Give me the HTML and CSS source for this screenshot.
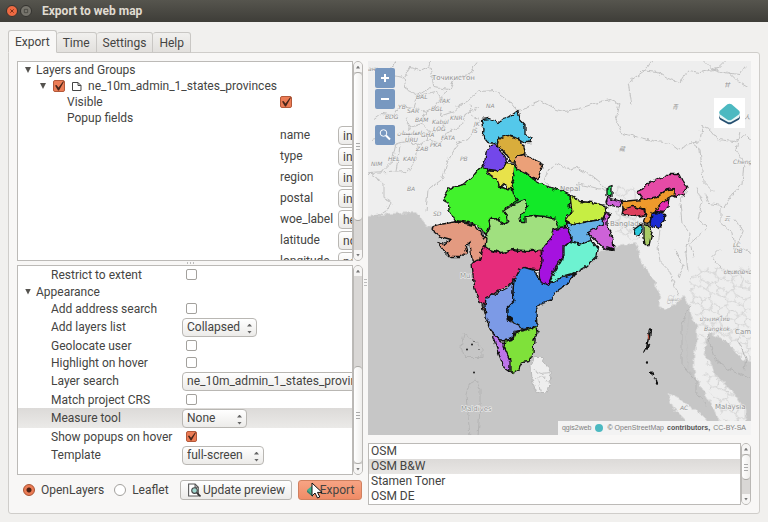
FILE: index.html
```html
<!DOCTYPE html>
<html lang="en">
<head>
<meta charset="utf-8">
<title>Export to web map</title>
<link rel="stylesheet" href="styles.css">
</head>
<body>
<header class="titlebar">
  <button class="win-btn win-close" aria-label="Close"><svg viewBox="0 0 12 12"><path d="M4 4l4 4M8 4l-4 4"/></svg></button>
  <button class="win-btn" aria-label="Maximize"><svg viewBox="0 0 12 12"><path d="M4 4h4v4h-4z"/></svg></button>
  <h1>Export to web map</h1>
</header>
<main class="dialog">
  <nav class="tabs" role="tablist">
    <button class="tab active" role="tab" aria-selected="true">Export</button>
    <button class="tab" role="tab">Time</button>
    <button class="tab" role="tab">Settings</button>
    <button class="tab" role="tab">Help</button>
  </nav>
  <div class="panel">
    <section class="left">
      <div class="pane layers">
        <div class="tree">
          <div class="row group"><i class="arrow"></i>Layers and Groups</div>
          <div class="row layer"><i class="arrow"></i><input type="checkbox" id="layer" checked><svg class="poly" viewBox="0 0 10 10"><path d="M.5 1.500h5.500l3 3v5h-8.500z"/><path d="M6 1.500v3h3"/></svg><label for="layer">ne_10m_admin_1_states_provinces</label></div>
          <div class="row sub"><label class="name" for="visible">Visible</label><input type="checkbox" id="visible" checked></div>
          <div class="row sub"><span class="name">Popup fields</span></div>
          <div class="row field"><label for="f1">name</label><select id="f1"><option>inline label</option></select></div>
          <div class="row field"><label for="f2">type</label><select id="f2"><option>inline label</option></select></div>
          <div class="row field"><label for="f3">region</label><select id="f3"><option>inline label</option></select></div>
          <div class="row field"><label for="f4">postal</label><select id="f4"><option>inline label</option></select></div>
          <div class="row field"><label for="f5">woe_label</label><select id="f5"><option>header label</option></select></div>
          <div class="row field"><label for="f6">latitude</label><select id="f6"><option>no label</option></select></div>
          <div class="row field"><label for="f7">longitude</label><select id="f7"><option>no label</option></select></div>
        </div>
        <div class="scroll"><i class="cap up"></i><i class="thumb thumb-layers"></i><i class="rest"></i><i class="cap down"></i></div>
      </div>
      <div class="grip-h"></div>
      <div class="pane options">
        <div class="tree">
          <div class="row opt"><label for="o1">Restrict to extent</label><input type="checkbox" id="o1"></div>
          <div class="row opt group"><i class="arrow"></i>Appearance</div>
          <div class="row opt"><label for="o2">Add address search</label><input type="checkbox" id="o2"></div>
          <div class="row opt tall"><label for="o3">Add layers list</label><span class="combo w-m"><select id="o3"><option>Collapsed</option></select></span></div>
          <div class="row opt"><label for="o4">Geolocate user</label><input type="checkbox" id="o4"></div>
          <div class="row opt"><label for="o5">Highlight on hover</label><input type="checkbox" id="o5"></div>
          <div class="row opt tall"><label for="o6">Layer search</label><span class="combo w-xl"><select id="o6"><option>ne_10m_admin_1_states_provinces: name</option></select></span></div>
          <div class="row opt"><label for="o7">Match project CRS</label><input type="checkbox" id="o7"></div>
          <div class="row opt tall current"><label for="o8">Measure tool</label><span class="combo w-s"><select id="o8"><option>None</option></select></span></div>
          <div class="row opt"><label for="o9">Show popups on hover</label><input type="checkbox" id="o9" checked></div>
          <div class="row opt tall"><label for="o10">Template</label><span class="combo w-l"><select id="o10"><option>full-screen</option></select></span></div>
        </div>
        <div class="scroll"><i class="cap up"></i><i class="rest"></i><i class="thumb thumb-options"></i><i class="cap down"></i></div>
      </div>
      <div class="actions">
        <label class="radio"><input type="radio" name="lib" checked>OpenLayers</label>
        <label class="radio"><input type="radio" name="lib">Leaflet</label>
        <button class="btn preview"><svg viewBox="0 0 13 13"><path d="M1.500 1h6l3 3v8h-9z" fill="#fff" stroke="#555"/><path d="M7.500 1v3h3" fill="none" stroke="#555"/><circle cx="7" cy="7" r="2.600" fill="#9fd8d0" stroke="#444"/><path d="M9 9l3.500 3.500" stroke="#333" stroke-width="1.500"/></svg>Update preview</button>
        <div class="export-wrap">
          <button class="btn export"><svg viewBox="0 0 14 14"><path d="M1 7l6-5 6 5-6 5z" fill="#3bb08f"/><path d="M1 7l6 5v2L1 9z" fill="#2b8272"/></svg>Export</button>
          <svg class="cursor" viewBox="0 0 12 17"><path d="M1 1v13l3-3 2.500 5 2.300-1-2.300-4.600H11z" fill="#fff" stroke="#111" stroke-linejoin="round"/></svg>
        </div>
      </div>
    </section>
    <div class="grip-v"></div>
    <section class="right">
      <div class="map">
        <svg class="map-art" viewBox="368 61 383 375" preserveAspectRatio="xMidYMid slice" role="img" aria-label="Map of India by state">
          <defs>
            <filter id="rough" x="-5%" y="-5%" width="110%" height="110%" color-interpolation-filters="sRGB">
              <feTurbulence type="fractalNoise" baseFrequency="0.2" numOctaves="2" seed="4"/>
              <feDisplacementMap in="SourceGraphic" scale="5" xChannelSelector="R" yChannelSelector="G"/>
              <feGaussianBlur stdDeviation="0.3"/>
            </filter>
            <pattern id="cells" width="19" height="17" patternUnits="userSpaceOnUse" patternTransform="rotate(24)">
              <path d="M0 4l5 2 3-5 6 4 5-1M5 6l-1 5 5 3 6-3-1-6M0 12l4-1M15 11l4 1M9 14l1 3M10 0l-2 1" fill="none" stroke="#d2d2d2"/>
            </pattern>
          </defs>
          <rect x="368" y="61" width="383" height="375" fill="#c6c6c6"/>
          <g filter="url(#rough)">
            <path fill="#eee" stroke="#d9d9d9" d="M360 50H760V364L742 360 730 345 720 338 709 333 706 345 704 355 710 362 715 375 725 385 735 395 745 410 745 420 751 445H727L722 425 716 415 712 405 704 392 697 380 694 370 694 355 697 342 697 325 693 320 688 305 684 296 675 305 665 310 659 308 660 295 655 284 650 275 641 262 638 250 635 243 615 248 598 252 560 280 525 325 500 332 487 305 479 262 479 232 433 228 427 227 421 218 417 213 390 214 360 218z"/>
            <path fill="#eee" stroke="#d9d9d9" d="M668 394l12 6 12 8 13 10 7 9 6 12h-20l-13-19-13-13z"/>
            <path fill="#eee" stroke="#b8b8b8" d="M534 358l8 0 8 14 1 13-6 8-9 0-4-13-1-14z"/>
            <path fill="none" stroke="#c4c4c4" d="M533 370l8 4 8-1M535 380l7-4 7 8M540 392l-2-12"/>
            <path fill="url(#cells)" d="M698 268H755V364L742 360 730 345 720 338 709 333 706 345 700 342 698 320 690 305 690 280zM706 355l9 18 20 22 10 15 6 26h-20l-15-31-12-25zM615 205h24v35h-24zM616 187h20v12h-20z"/>
            <g fill="none" stroke="#c2c2c2">
              <path d="M368 70l8-2 8 8 8-8 4-8M392 76l12 2 6-10 10 3 9-4 1-7M430 68l4 20 16 2 5-12 14-3 8-12M404 78l2 12 12 6 12-8M418 96l-4 12-14-2-6 10-12-2-8 6M414 108l12 4 10-6 8-12 6-4M436 106l6 10 12-4 8-8M426 112l-4 12 8 8 12-2 4-10M422 124l-12 4-4-10M410 128l-2 14 10 4 10-6 2-8M408 142l-12 2-10-8-14 4M396 144l-4 18-12 12M400 146l-4 26M418 146l-2 14-8 12-40 2M428 140l12 4 8-12 12-4 6-14 12-6M448 160l-6 20-14 10-2 22M448 160l10-16 10-4 8-12M368 172l16 12 0 14 8 4-5 8-10 7M418 96l18-4 8 12M455 107l12-5 12-10 16-1 14 10 8 10M470 105l2 12 10 6M517 111l9-2 14-8 16 9 8 2 16-3 14-5 16-4 10 4"/>
              <path d="M544 181l4-10 10-7 10 6 8-2 16 9 12 10 4 3M544 181l10 9 8 3M560 192l12 4M606 191l-16-4-14-3M632 105l-4-22 18-13 6-9M640 71l18 2 10 6 12 4 8-12 12 2 18-4 8-8M728 72l10 10 10 6M704 61l8 8 12 4 16 2 5-8M620 104l-4 16 6 14 18 4 16 4 14 2 8 6 12-6 10-2 2-16 8 4 8 10 16 2 10-6 12 8M690 142l10 8 3 32 10 10M740 132l-4 18 8 14-2 20-12 14-6 10M688 190l-8 12 2 22 8 10-4 20 2 18M696 188l6 14-4 18 10 8M705 194l4 10 12 2 0 18 12 10 2 16M708 228l-18 16 4 14M660 230l-2 18 2 14 10 10 8 24M675 250l8 16-4 12M735 220l8 12-6 14 14 8M720 250l-8 8 10 12M690 310l-4 30 2 30 8 10"/>
              <path d="M690 305l-8 20 0 40 14 16 0 12 10 12M707 334l8 26 14 10 20 8M738 340l8 20-2 10" stroke="#b4b4b4"/>
            </g>
            <path fill="none" stroke="#b4b4b4" d="M464 334l18 14v10h-17l-4-10zM470 383l6-3 4 10v18l-2 30M470 383l-4 12 4 42"/>
          </g>
          <g class="labels">
            <text x="432" y="80" class="country">Точикистон</text>
            <text x="416" y="99">BAL</text><text x="439" y="103">TAK</text><text x="398" y="109">YB</text><text x="407" y="113">SAR</text><text x="431" y="111">BGL</text><text x="385" y="119">BDG</text><text x="415" y="122">BAM</text><text x="450" y="120">KNR</text><text x="432" y="124">Kabul</text><text x="433" y="131">LOG</text><text x="421" y="137">GHA</text><text x="441" y="140">FATA</text><text x="405" y="142">URU</text><text x="430" y="147">PKA</text><text x="416" y="151">ZAB</text><text x="371" y="166">NIM</text><text x="388" y="161">HEL</text><text x="403" y="161">KAN</text><text x="486" y="108">NA</text><text x="474" y="126">JK</text><text x="472" y="133">IS</text><text x="460" y="161">PB</text><text x="407" y="191">BA</text><text x="433" y="216">SD</text><text x="368" y="71">ан</text><text x="397" y="135">افغانستان</text>
            <text x="560" y="191" class="country">Nepal</text><text x="610" y="226" class="country">Bangladesh</text><text x="460" y="278" class="country">Mum</text><text x="461" y="411" class="country">Maldives</text>
            <text x="672" y="109">青</text><text x="619" y="151">藏</text><text x="724" y="87">甘</text><text x="744" y="119">人</text><text x="724" y="221">云</text><text x="733" y="164">Cheng</text><text x="733" y="247">LC</text><text x="734" y="253">DB</text><text x="724" y="274">ປະເທດລາວ</text><text x="667" y="301">မြန်မာ</text><text x="699" y="321">ประเทศไทย</text><text x="704" y="331">Bangkok</text><text x="735" y="334" class="country">Cam</text><text x="680" y="410">AC</text><text x="715" y="409" class="country">Malaysia</text>
          </g>
          <g class="states" filter="url(#rough)">
            <path fill="#12e928" d="M513 165l7 5 12 9 13 7 15 5 11 5-2 10 4 7-7 5-1 14-20-2-20-4-4-2-8-10 0-8-3-11 0-16z"/>
            <path fill="#41f22c" d="M486 168l2 7 9 5 3 8 5 1 6 0 2 7 5 5-7 4-6 4 2 4 1 8-5 4-4-5-8-1-1 8-3 9-5-4-4-6-10-3-13-2-6-11-1-8-5-3 6-10 15-4 8-7 8-10z"/>
            <path fill="#a0e07f" d="M525 200l3 6-4 7-4 5 1 5 4 0 0-6 10-1 10 1 11 3 3 8 0 1-6 9-3 9-8 4H518l-18 2-10-3-5-4 0-7 2-5 3-6-1-8 9-1 4 7 6-3-2-7-2-5 8-5 8-4z"/>
            <path fill="#54c8ea" d="M482 120l7-1 9 4 5-4 7-2 8-6 2 9 5 5 0 10 6 3-1 5-5 0-5-3-5-2-8-2-8 3-2 5-9-1-5-6 1-7z"/>
            <path fill="#d9ad3c" d="M499 139l8-3 8 3 5 2 4 6 1 7-4 2-4 1-2 6-5-2-5-7-3-4-5-4z"/>
            <path fill="#e8e24a" d="M487 170l10 1 8-6 3-2 6 1-1 8 1 5-2 4 2 8-7 0-3-5-4 4-3-8-7-5z"/>
            <path fill="#7347ea" d="M495 145l5 6 4 5 3 6-4 7-6 2-8-1-7-2 3-7 1-8 4-6z"/>
            <path fill="#eba078" d="M516 157l8-2 6 2 6 5 7 3-3 8-2 6-5 0-7-6-8-3-3-6z"/>
            <path fill="#c6ee43" d="M570 196l10 6 12 1 13 3 1 7-4 7-14 2-13 3-9-3 6-9-1-8z"/>
            <path fill="#66b0e6" d="M566 223l9 2 13-3 14-2 4-4-2 8-9 6-7 5 4 6-12 4-10-3 2-4-4-10z"/>
            <path fill="#cd62d8" d="M588 233l15-9 2-10 6 1-4 4 0 7 6 14 1 10-9 0-7-7zM606 203l2-5 14 4-2 6-7-2-5 1z"/>
            <path fill="#1be258" d="M606 189l6-2 0 10-6 0z"/>
            <path fill="#ee9a2c" d="M622 202l21-2 14-2 10-8 8-1 0 6-12 7-6 8-5 8-4 7-5-2 3-8 0-6-6 0-17 1z"/>
            <path fill="#e64ba6" d="M637 192l5-2 8-7 13-6 4-2 12 0 3 6 5 8-4 3 2 5-7-2-3 2 0-8-8 1-10 7-14 3z"/>
            <path fill="#e32bb0" d="M669 199l-1 8-4 6-9-1 4-6 4-4z"/>
            <path fill="#dd3f5c" d="M623 210l9-3 13 3 1 5-10 2-14-2z"/>
            <path fill="#1b2bd2" d="M652 214l5-1 8 2-1 7-6 7-8-4z"/>
            <path fill="#a9cb66" d="M644 225l7 2 1 6-3 13-4 0-1-8z"/>
            <path fill="#2bc8db" d="M634 230l8-6 0 7-3 6-4-1z"/>
            <path fill="#6df2d1" d="M564 248l6-6 10 3 12-4 6 8-1 8-5 5-7 6-9 5-11 3-10 5-6 3 6-12 5-9 4-7z"/>
            <path fill="#a512df" d="M553 230l14-2 5 12-9 8 0 9-5 6-3 7-3 5-4 11-8-4-1-10 2-10 1-12 8-10 2-5z"/>
            <path fill="#e39a80" d="M433 227l7-2 17-3 18 4 6 7 5 7-1 7-4 6-1 7-6 2-2-2-1-8-1-9-5 4 2 6-7 5-9 0-8-7-5-8 7 2 6-5-11-3-8-6z"/>
            <path fill="#e62c7b" d="M485 247l6 4 12 3 9-4 18 2 11-1 1 11-2 8-6 0-10-2-5 3-1 7-5 3-5 5-8 4-7 5-7 3-1 7-6-2-4-13-2-15-1-12 8-2 1-8z"/>
            <path fill="#7c9ae6" d="M486 298l9-3 13-7 6-6-1 11 1 9-6 6 0 7 2 7 10 4 1 5-7 1-1 7-8 2-6-1-8-8-5-14-1-12z"/>
            <path fill="#3b87e4" d="M519 270l5-2 10 3 6 11 8 4 9-6 18-6-8 11-11 7-7 10-10 3-3 8 1 14-13 3-4-4-9-5-3-6 0-7 6-6-1-9 1-12z"/>
            <path fill="#bd75ea" d="M491 332l9 9 5 4 3 9 3 8-1 10-6-4-5-13-4-12z"/>
            <path fill="#7fe13a" d="M505 341l8-1 2-7 9-2 13-4 1 6-4 7-1 13-4 8-7 1-3 8-6 4-3-3 0-10-6-14z"/>
            <path fill="#e98a65" d="M482 305l3 3-1 6z"/>
            <path class="islands" d="M508 317l3 2-2 2zM607 248l6 2-3 0M650 330l-1 8-2 11M645 351l0 1M647 364h0M651 373l2 2M656 380l1 4"/>
          </g>
          <path d="M648 335l1 5" stroke="#d0503a"/>
          <g fill="#222"><circle cx="467" cy="350" r="1"/><circle cx="472" cy="345" r="1"/><circle cx="474" cy="342" r=".6"/><circle cx="479" cy="350" r=".6"/><circle cx="474" cy="373" r="1"/></g>
        </svg>
        <div class="zoom">
          <button aria-label="Zoom in"><svg viewBox="0 0 20 20"><path d="M10 6v8M6 10h8"/></svg></button>
          <button aria-label="Zoom out"><svg viewBox="0 0 20 20"><path d="M6 10h8"/></svg></button>
          <button class="find" aria-label="Search"><svg viewBox="0 0 20 20"><circle cx="8.500" cy="8" r="3.300"/><path d="M11 10.500l4 4" stroke-width="2"/></svg></button>
        </div>
        <button class="switcher" aria-label="Layers"><svg viewBox="0 0 30 30"><path d="M5 16v3q0 1 1 2l7 4q2 1 4 0l7-4q1-1 1-2v-3z" fill="#254f70"/><path d="M5 15v2q0 1 1 2l7 4q2 1 4 0l7-4q1-1 1-2v-2z" fill="#e8f6f6"/><path d="M13 6q2-1 4 0l7 6q2 2 0 4l-7 5q-2 1-4 0l-7-5q-2-2 0-4z" fill="#4cb9c1"/></svg></button>
        <p class="credit"><a href="#">qgis2web</a><i class="dot"></i><span>© <a href="#">OpenStreetMap</a></span><b>contributors,</b><a href="#">CC-BY-SA</a></p>
      </div>
      <div class="pane basemaps">
        <ul role="listbox" aria-label="Base maps">
          <li role="option">OSM</li>
          <li role="option" aria-selected="true">OSM B&amp;W</li>
          <li role="option">Stamen Toner</li>
          <li role="option">OSM DE</li>
        </ul>
        <div class="scroll"><i class="cap up"></i><i class="thumb thumb-base"></i><i class="rest"></i><i class="cap down"></i></div>
      </div>
    </section>
  </div>
</main>
</body>
</html>
```
FILE: styles.css
```css
* { box-sizing: border-box; }
body {
  margin: 0;
  height: 100vh;
  display: flex;
  flex-direction: column;
  background: #f1f0ee;
  color: #444442;
  font: 12px/16px Roboto, "Noto Sans", "Noto Sans CJK SC", sans-serif;
}
button, select, input { font: inherit; color: inherit; margin: 0; }
button { padding: 0; }
svg { display: block; }

.titlebar {
  flex: none;
  height: 22px;
  display: flex;
  align-items: center;
  gap: 2px;
  padding-left: 6px;
  background: linear-gradient(#56554e, #3e3d38);
}
.titlebar h1 {
  margin: 0 0 0 8px;
  font-size: 12px;
  line-height: 20px;
  font-weight: bold;
  color: #e0dcd2;
}
.win-btn {
  width: 12px;
  height: 12px;
  border: 1px solid #33322e;
  border-radius: 50%;
  background: #77756d;
}
.win-btn svg { fill: none; stroke: #45443f; }
.win-close { background: #ee6a42; }
.win-close svg { stroke: #6b2410; }

.dialog {
  flex: 1;
  min-height: 0;
  display: flex;
  flex-direction: column;
  padding: 8px;
}
.tabs {
  display: flex;
  align-items: flex-end;
  height: 23px;
  margin-bottom: -1px;
  z-index: 1;
}
.tab {
  height: 21px;
  padding: 0 6px;
  border: 1px solid #c9c7c4;
  border-left-width: 0;
  border-radius: 3px 3px 0 0;
  background: linear-gradient(#f1f0ee, #e2e0dd);
}
.tab.active {
  height: 23px;
  border-left-width: 1px;
  border-bottom-color: #f8f7f6;
  background: #f8f7f6;
}
.panel {
  flex: 1;
  min-height: 0;
  display: grid;
  grid-template-columns: minmax(0, 346fr) 5px minmax(0, 383fr);
  padding: 8px;
  border: 1px solid #cfcdca;
  border-radius: 0 3px 3px 3px;
  background: #f8f7f6;
}
.left, .right { display: flex; flex-direction: column; min-height: 0; }
.pane { display: flex; min-height: 0; }
.layers { flex: 200 1 0; }
.options { flex: 210 1 0; }
.tree {
  flex: 1;
  min-width: 0;
  overflow: hidden;
  border: 1px solid #bcbab7;
  background: #fff;
  white-space: nowrap;
}
.grip-h {
  flex: none;
  width: 8px;
  height: 4px;
  margin-left: 170px;
  background: repeating-linear-gradient(90deg, #bbb 0 1px, transparent 1px 3px);
  background-clip: content-box;
  padding: 1px 0;
}
.grip-v {
  height: 8px;
  margin-top: 218px;
  padding: 0 1px;
  background: repeating-linear-gradient(#bbb 0 1px, transparent 1px 3px);
  background-clip: content-box;
}

.row { display: flex; align-items: center; height: 16px; }
.arrow {
  width: 6px;
  height: 6px;
  background: #55534f;
  clip-path: polygon(0 0, 100% 0, 50% 100%);
}
.group { padding-left: 7px; gap: 5px; }
.layer { padding-left: 22px; }
.layer .arrow { margin-right: 7px; }
.poly { width: 10px; height: 10px; margin: 0 6px 0 7px; fill: none; stroke: #444; }
.sub { padding-left: 49px; }
.sub .name { flex: 0 0 213px; }
.field { height: 21px; padding-left: 262px; align-items: flex-start; }
.field label { flex: 0 0 58px; line-height: 19px; }
.opt { height: 17px; }
.opt.tall { height: 20px; }
.opt label { flex: 0 0 164px; padding-left: 33px; }
.opt input { margin-left: 4px; }
.current { background: linear-gradient(#dcdad8, #ebeae8); }

input[type="checkbox"], input[type="radio"] {
  appearance: none;
  flex: none;
  width: 12px;
  height: 12px;
  border: 1px solid #a3a19d;
  border-radius: 2px;
  background: #fff;
}
.options input[type="checkbox"] { width: 11px; height: 11px; }
input[type="checkbox"]:checked { border-color: #b3593a; background: #ec7c55; }
input[type="checkbox"]:checked::after {
  content: "";
  display: block;
  height: 100%;
  background: #48261a;
  clip-path: polygon(10% 45%, 25% 40%, 45% 65%, 90% 5%, 100% 5%, 50% 95%, 40% 95%);
}
input[type="radio"] { border-radius: 50%; }
input[type="radio"]:checked {
  border-color: #a8502f;
  background: radial-gradient(#4b2215 0 2px, #ec7c55 3px);
}

select {
  appearance: none;
  height: 19px;
  padding: 0 4px;
  border: 1px solid #b9b7b3;
  border-radius: 4px;
  background: linear-gradient(#fff, #ecebe9);
}
.field select { flex: 0 0 110px; }
.combo { position: relative; flex: none; }
.combo select { display: block; width: 100%; }
.combo::before, .combo::after {
  content: "";
  position: absolute;
  right: 5px;
  width: 5px;
  height: 3px;
  background: #666;
  z-index: 1;
}
.combo::before { top: 6px; clip-path: polygon(50% 0, 100% 100%, 0 100%); }
.combo::after { bottom: 3px; clip-path: polygon(0 0, 100% 0, 50% 100%); }
.w-s { width: 65px; }
.w-m { width: 75px; }
.w-l { width: 82px; }
.w-xl { width: 260px; }

.scroll {
  flex: none;
  width: 10px;
  display: flex;
  flex-direction: column;
  border: 1px solid #bab8b5;
  border-radius: 5px;
  background: #d9d7d5;
  overflow: hidden;
}
.cap {
  flex: none;
  height: 10px;
  background: #f6f5f4;
  display: grid;
  place-items: center;
}
.cap::after { content: ""; width: 4px; height: 3px; background: #777; }
.up::after { clip-path: polygon(50% 0, 100% 100%, 0 100%); }
.down::after { clip-path: polygon(0 0, 100% 0, 50% 100%); }
.rest { flex: 1; }
.thumb {
  border: 1px solid #aaa8a5;
  border-width: 1px 0;
  border-radius: 4px;
  background: linear-gradient(90deg, #fff, #efeeec);
  display: grid;
  place-items: center;
}
.thumb::after {
  content: "";
  width: 4px;
  height: 7px;
  background: repeating-linear-gradient(#aaa 0 1px, transparent 1px 3px);
}
.thumb-layers { flex: 0 0 75%; }
.thumb-options { flex: 0 0 47%; }
.thumb-base { flex: 0 0 44%; }

.actions {
  flex: none;
  display: flex;
  align-items: center;
  height: 20px;
  margin: 5px 0;
  padding-left: 6px;
  white-space: nowrap;
}
.radio { display: flex; align-items: center; gap: 6px; }
.radio + .radio { margin-left: 10px; }
.btn {
  display: flex;
  align-items: center;
  justify-content: center;
  height: 20px;
  border: 1px solid #b9b7b3;
  border-radius: 3px;
  background: linear-gradient(#fff, #ecebe9);
}
.btn svg { width: 14px; height: 14px; }
.preview { width: 112px; margin-left: auto; gap: 2px; }
.export-wrap { position: relative; width: 64px; margin: 0 1px 0 6px; }
.export { width: 100%; border-color: #d0805f; background: linear-gradient(#f7a484, #ef8b66); }
.cursor { position: absolute; left: 13px; top: 2px; width: 12px; height: 17px; }

.map { position: relative; flex: 1; min-height: 0; overflow: hidden; }
.map-art { width: 100%; height: 100%; }
.states path { stroke: #111; stroke-width: 1.3; stroke-linejoin: round; stroke-linecap: round; }
.states .islands { fill: #111; stroke-width: 2.4; }
.labels text {
  font: italic 6px "DejaVu Sans", "Noto Sans CJK SC", sans-serif;
  fill: #909090;
  stroke: #f4f4f4;
  stroke-width: 1px;
  paint-order: stroke;
}
.labels .country { font-size: 7px; font-style: normal; }
.zoom { position: absolute; left: 7px; top: 7px; display: grid; gap: 1px; }
.zoom button {
  width: 20px;
  height: 20px;
  border: 0;
  border-radius: 2px;
  background: #7898c0;
}
.zoom svg { fill: none; stroke: #fff; stroke-width: 2; }
.zoom .find { margin-top: 15px; }
.find svg { stroke-width: 1; }
.switcher {
  position: absolute;
  right: 6px;
  top: 37px;
  width: 31px;
  height: 30px;
  border: 0;
  background: #fff;
}
.credit {
  position: absolute;
  right: 0;
  bottom: 0;
  display: flex;
  align-items: center;
  gap: 3px;
  height: 14px;
  margin: 0;
  padding: 0 5px 0 4px;
  background: #f3f3f3;
  font: 7px/14px "Liberation Sans", sans-serif;
  white-space: nowrap;
  color: #555;
}
.credit a { color: #808080; text-decoration: none; }
.dot { width: 8px; height: 8px; margin: 0 1px; border-radius: 50%; background: #4cb9c1; }

.basemaps { flex: none; height: 62px; margin-top: 8px; }
.basemaps ul {
  flex: 1;
  margin: 0;
  padding: 0;
  overflow: hidden;
  list-style: none;
  border: 1px solid #bcbab7;
  background: #fff;
}
.basemaps li { padding-left: 2px; line-height: 15px; }
.basemaps li[aria-selected] { background: linear-gradient(#dcdad8, #e8e6e4); }
```
